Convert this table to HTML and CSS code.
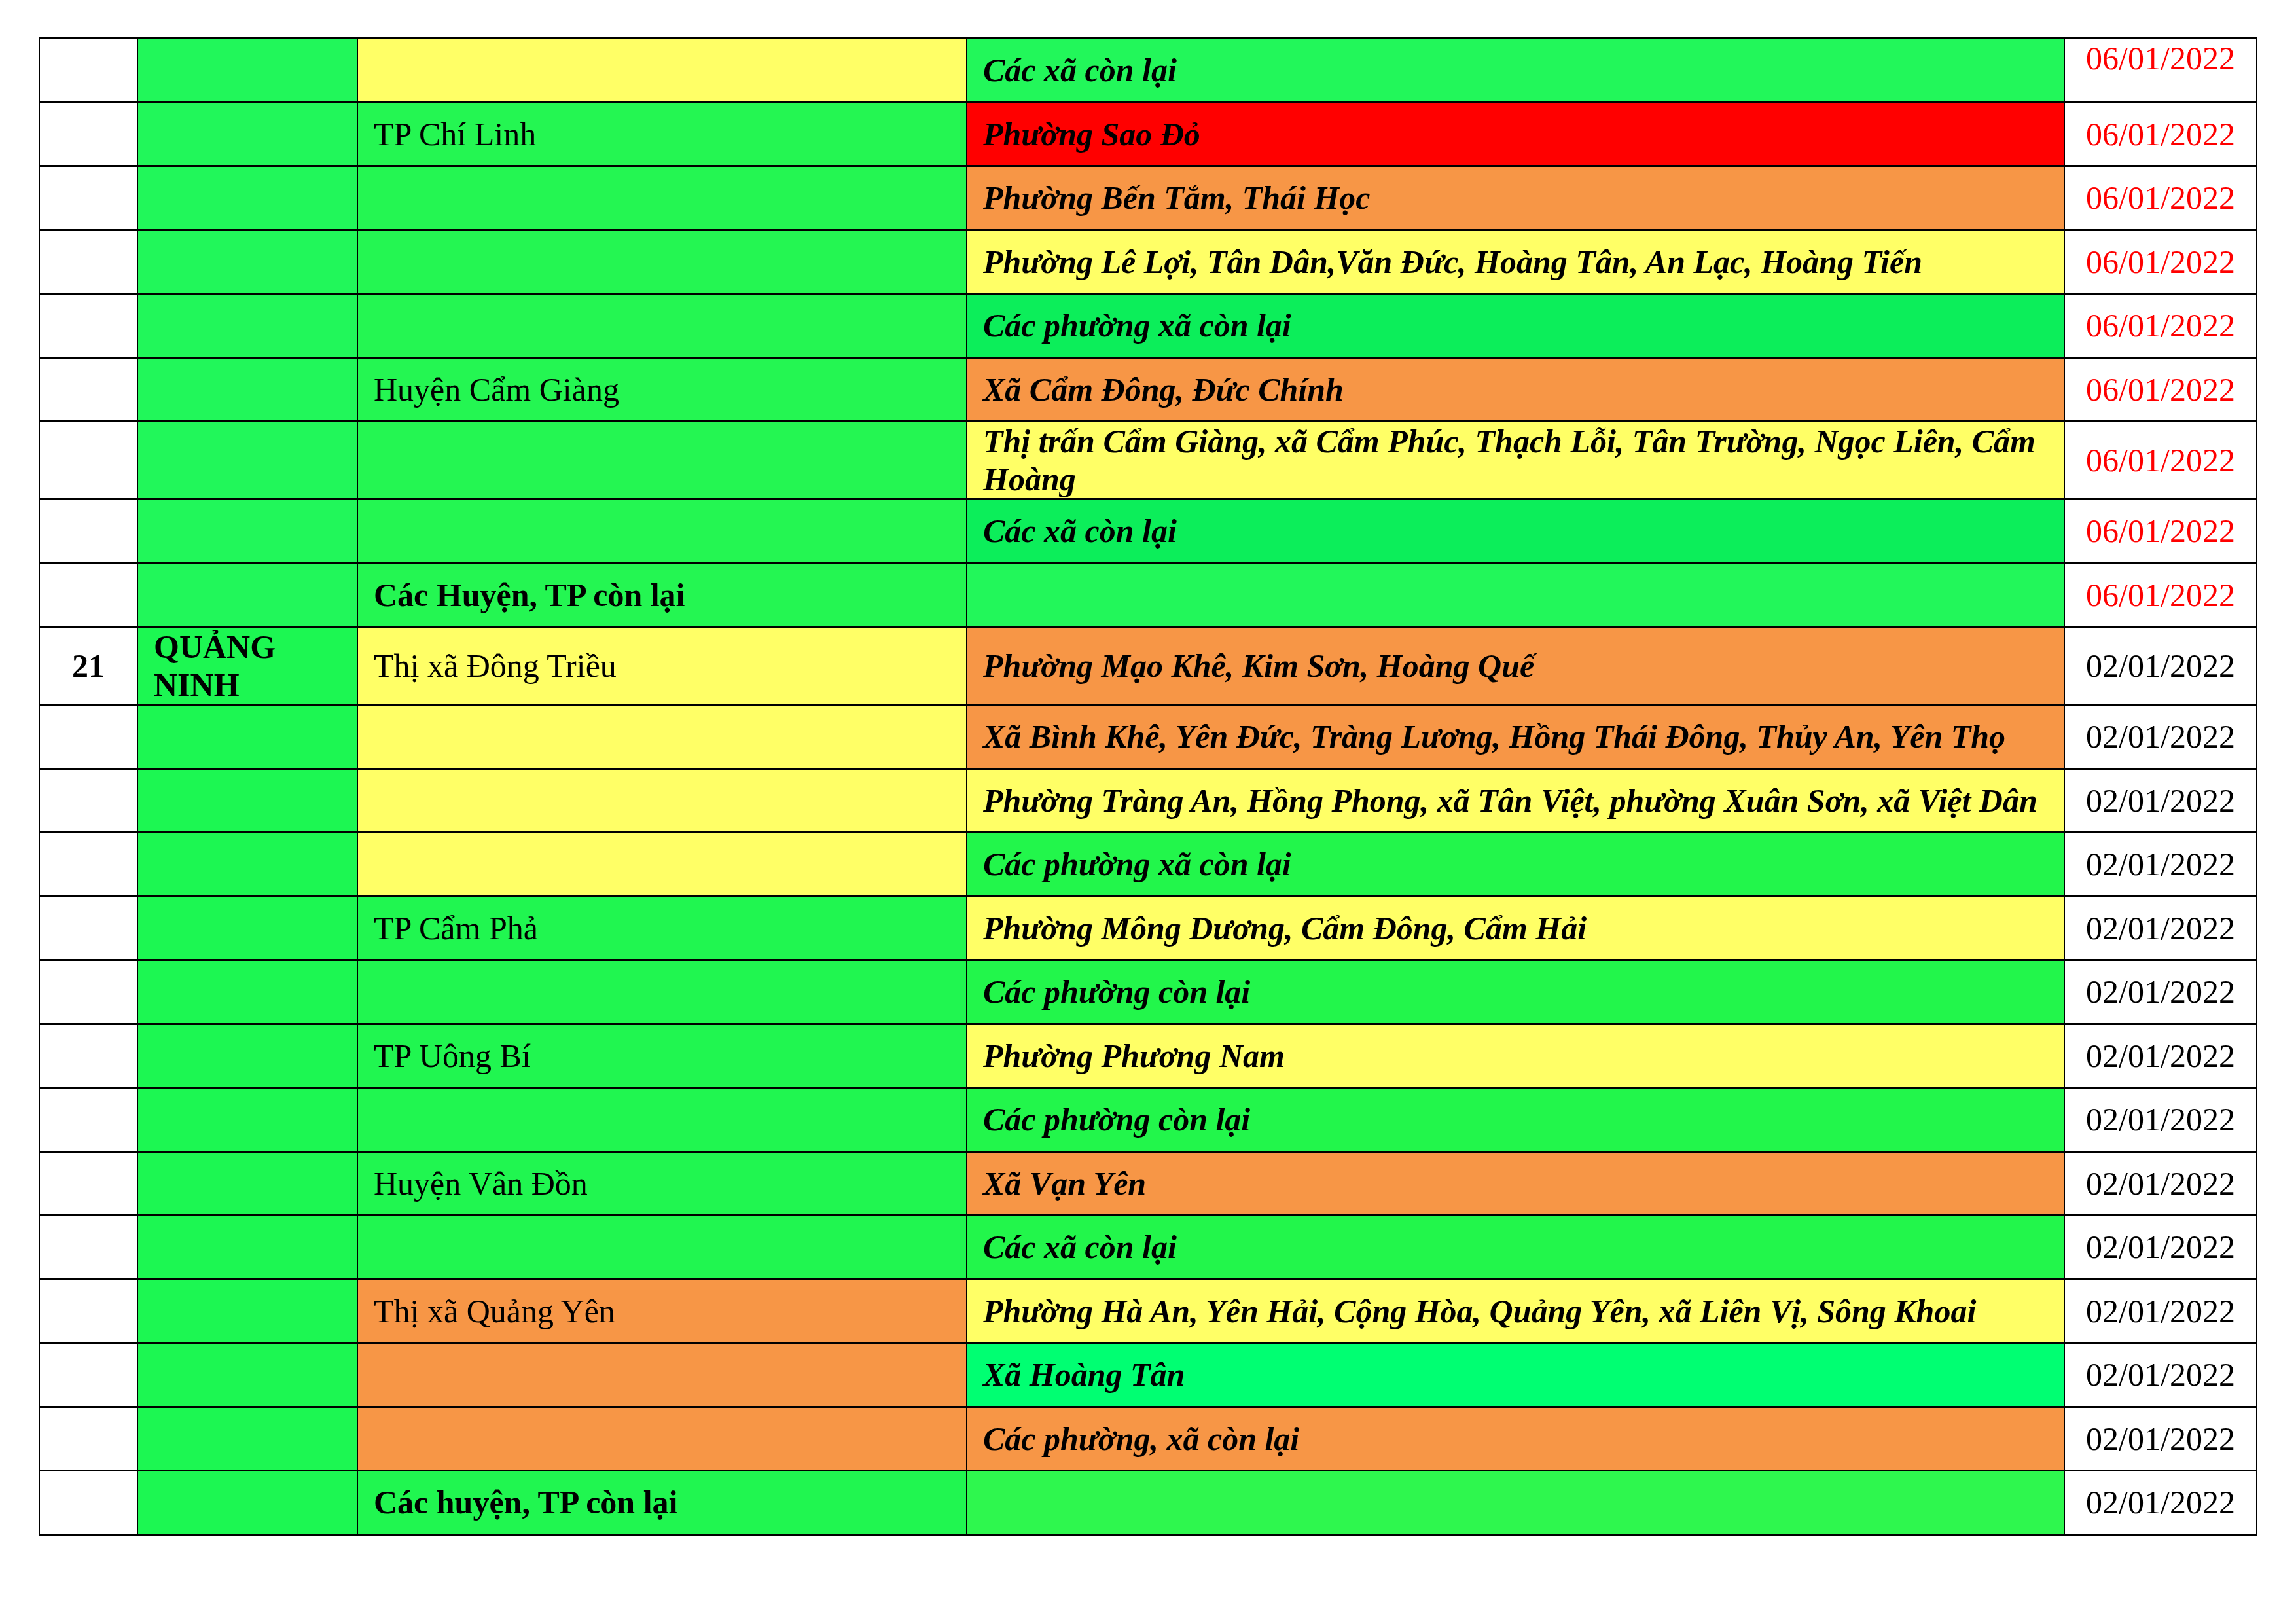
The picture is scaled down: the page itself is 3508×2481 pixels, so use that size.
FILE: index.html
```html
<!DOCTYPE html>
<html lang="vi">
<head>
<meta charset="utf-8">
<title>Bảng phân loại cấp độ dịch</title>
<link rel="stylesheet" href="styles.css">
</head>
<body>
<table class="sheet">
  <colgroup>
    <col class="c-stt"><col class="c-tinh"><col class="c-huyen"><col class="c-xa"><col class="c-ngay">
  </colgroup>
  <tbody>
    <tr>
      <td class="stt"></td><td class="tinh g-hd"></td><td class="huyen yellow"></td>
      <td class="xa green">Các xã còn lại</td><td class="ngay red-text top">06/01/2022</td>
    </tr>
    <tr>
      <td class="stt"></td><td class="tinh g-hd"></td><td class="huyen g-hd3">TP Chí Linh</td>
      <td class="xa red">Phường Sao Đỏ</td><td class="ngay red-text">06/01/2022</td>
    </tr>
    <tr>
      <td class="stt"></td><td class="tinh g-hd"></td><td class="huyen g-hd3"></td>
      <td class="xa orange">Phường Bến Tắm, Thái Học</td><td class="ngay red-text">06/01/2022</td>
    </tr>
    <tr>
      <td class="stt"></td><td class="tinh g-hd"></td><td class="huyen g-hd3"></td>
      <td class="xa yellow">Phường Lê Lợi, Tân Dân,Văn Đức, Hoàng Tân, An Lạc, Hoàng Tiến</td><td class="ngay red-text">06/01/2022</td>
    </tr>
    <tr>
      <td class="stt"></td><td class="tinh g-hd"></td><td class="huyen g-hd3"></td>
      <td class="xa green-dk">Các phường xã còn lại</td><td class="ngay red-text">06/01/2022</td>
    </tr>
    <tr>
      <td class="stt"></td><td class="tinh g-hd"></td><td class="huyen g-hd3">Huyện Cẩm Giàng</td>
      <td class="xa orange">Xã Cẩm Đông, Đức Chính</td><td class="ngay red-text">06/01/2022</td>
    </tr>
    <tr>
      <td class="stt"></td><td class="tinh g-hd"></td><td class="huyen g-hd3"></td>
      <td class="xa yellow">Thị trấn Cẩm Giàng, xã Cẩm Phúc, Thạch Lỗi, Tân Trường, Ngọc Liên, Cẩm Hoàng</td><td class="ngay red-text">06/01/2022</td>
    </tr>
    <tr>
      <td class="stt"></td><td class="tinh g-hd"></td><td class="huyen g-hd3"></td>
      <td class="xa green-dk">Các xã còn lại</td><td class="ngay red-text">06/01/2022</td>
    </tr>
    <tr>
      <td class="stt"></td><td class="tinh g-hd"></td><td class="huyen g-hd3 bold">Các Huyện, TP còn lại</td>
      <td class="xa green"></td><td class="ngay red-text">06/01/2022</td>
    </tr>
    <tr>
      <td class="stt bold">21</td><td class="tinh g-qn bold">QUẢNG NINH</td><td class="huyen yellow">Thị xã Đông Triều</td>
      <td class="xa orange">Phường Mạo Khê, Kim Sơn, Hoàng Quế</td><td class="ngay">02/01/2022</td>
    </tr>
    <tr>
      <td class="stt"></td><td class="tinh g-qn"></td><td class="huyen yellow"></td>
      <td class="xa orange">Xã Bình Khê, Yên Đức, Tràng Lương, Hồng Thái Đông, Thủy An, Yên Thọ</td><td class="ngay">02/01/2022</td>
    </tr>
    <tr>
      <td class="stt"></td><td class="tinh g-qn"></td><td class="huyen yellow"></td>
      <td class="xa yellow">Phường Tràng An, Hồng Phong, xã Tân Việt, phường Xuân Sơn, xã Việt Dân</td><td class="ngay">02/01/2022</td>
    </tr>
    <tr>
      <td class="stt"></td><td class="tinh g-qn"></td><td class="huyen yellow"></td>
      <td class="xa g-qn4">Các phường xã còn lại</td><td class="ngay">02/01/2022</td>
    </tr>
    <tr>
      <td class="stt"></td><td class="tinh g-qn"></td><td class="huyen g-qn3">TP Cẩm Phả</td>
      <td class="xa yellow">Phường Mông Dương, Cẩm Đông, Cẩm Hải</td><td class="ngay">02/01/2022</td>
    </tr>
    <tr>
      <td class="stt"></td><td class="tinh g-qn"></td><td class="huyen g-qn3"></td>
      <td class="xa g-qn4">Các phường còn lại</td><td class="ngay">02/01/2022</td>
    </tr>
    <tr>
      <td class="stt"></td><td class="tinh g-qn"></td><td class="huyen g-qn3">TP Uông Bí</td>
      <td class="xa yellow">Phường Phương Nam</td><td class="ngay">02/01/2022</td>
    </tr>
    <tr>
      <td class="stt"></td><td class="tinh g-qn"></td><td class="huyen g-qn3"></td>
      <td class="xa g-qn4">Các phường còn lại</td><td class="ngay">02/01/2022</td>
    </tr>
    <tr>
      <td class="stt"></td><td class="tinh g-qn"></td><td class="huyen g-qn3">Huyện Vân Đồn</td>
      <td class="xa orange">Xã Vạn Yên</td><td class="ngay">02/01/2022</td>
    </tr>
    <tr>
      <td class="stt"></td><td class="tinh g-qn"></td><td class="huyen g-qn3"></td>
      <td class="xa g-qn4">Các xã còn lại</td><td class="ngay">02/01/2022</td>
    </tr>
    <tr>
      <td class="stt"></td><td class="tinh g-qn"></td><td class="huyen orange">Thị xã Quảng Yên</td>
      <td class="xa yellow">Phường Hà An, Yên Hải, Cộng Hòa, Quảng Yên, xã Liên Vị, Sông Khoai</td><td class="ngay">02/01/2022</td>
    </tr>
    <tr>
      <td class="stt"></td><td class="tinh g-qn"></td><td class="huyen orange"></td>
      <td class="xa bright">Xã Hoàng Tân</td><td class="ngay">02/01/2022</td>
    </tr>
    <tr>
      <td class="stt"></td><td class="tinh g-qn"></td><td class="huyen orange"></td>
      <td class="xa orange">Các phường, xã còn lại</td><td class="ngay">02/01/2022</td>
    </tr>
    <tr>
      <td class="stt"></td><td class="tinh g-qn"></td><td class="huyen g-qn3 bold">Các huyện, TP còn lại</td>
      <td class="xa g-last"></td><td class="ngay">02/01/2022</td>
    </tr>
  </tbody>
</table>
</body>
</html>
```

FILE: styles.css
```css
html, body {
  margin: 0;
  padding: 0;
  background: #ffffff;
}

body {
  padding: 57px 0 0 59px;
  font-family: "Liberation Serif", "Times New Roman", serif;
  font-size: 50px;
  color: #000000;
}

.sheet {
  border-collapse: collapse;
  table-layout: fixed;
  width: 3388px;
}

.c-stt { width: 150px; }
.c-tinh { width: 336px; }
.c-huyen { width: 931px; }
.c-xa { width: 1677px; }
.c-ngay { width: 294px; }

.sheet tr {
  height: 97.5px;
}

.sheet td {
  border-top: 3px solid #000;
  border-bottom: 3px solid #000;
  border-left: 2px solid #000;
  border-right: 2px solid #000;
  padding: 0 24px;
  vertical-align: middle;
  line-height: normal;
  background: #ffffff;
}

.stt {
  text-align: center;
  padding: 0;
}

.xa {
  font-weight: bold;
  font-style: italic;
}

.ngay {
  text-align: center;
  padding: 0;
}

.sheet td.top {
  vertical-align: top;
}

.bold {
  font-weight: bold;
}

.red-text {
  color: #ff0000;
}

.sheet td.g-hd { background: #21f75a; }
.sheet td.g-hd3 { background: #24f652; }
.sheet td.green { background: #22f75a; }
.sheet td.green-dk { background: #0cee5a; }
.sheet td.g-qn { background: #1cf752; }
.sheet td.g-qn3 { background: #20f650; }
.sheet td.g-qn4 { background: #22f64b; }
.sheet td.g-last { background: #2ef74e; }
.sheet td.bright { background: #00ff72; }
.sheet td.yellow { background: #ffff66; }
.sheet td.orange { background: #f79646; }
.sheet td.red { background: #ff0000; }
```
